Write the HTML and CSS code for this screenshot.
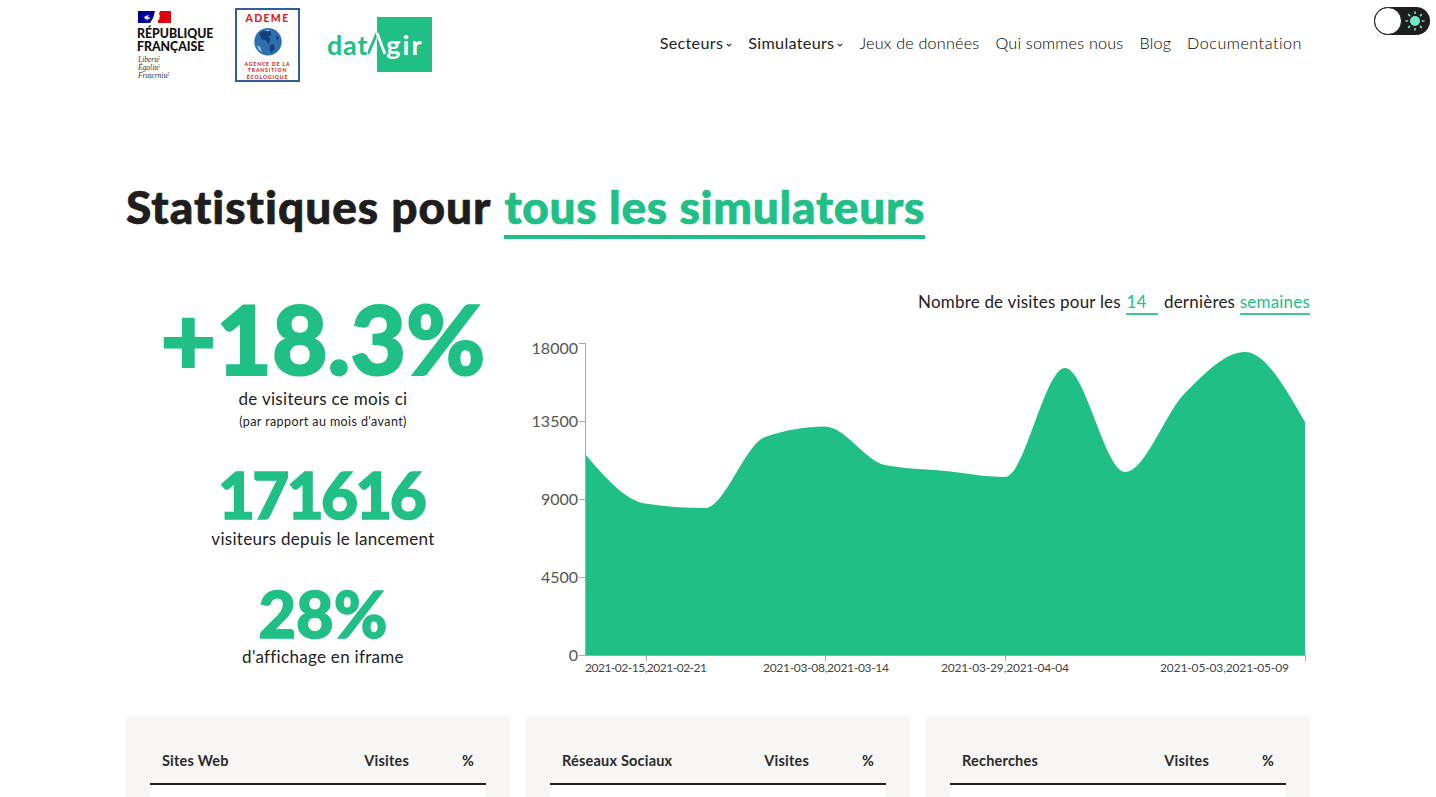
FILE: index.html
```html
<!DOCTYPE html>
<html lang="fr">
<head>
<meta charset="utf-8">
<title>Statistiques pour tous les simulateurs</title>
<link rel="stylesheet" href="styles.css">
</head>
<body>
<button class="toggle" aria-label="Thème">
  <span class="knob"></span>
  <svg class="sun" width="20" height="20" viewBox="0 0 20 20">
    <circle cx="10" cy="10" r="5" fill="#6fe8c3"/>
    <g stroke="#6fe8c3" stroke-width="1.6" stroke-linecap="round">
      <path d="M10 1v1.5M10 17.500v1.500M1 10h1.500M17.500 10H19M3.600 3.600l1 1M15.400 15.400l1 1M3.600 16.400l1-1M15.400 4.600l1-1"/>
    </g>
  </svg>
</button>
<div class="page">
  <header class="header">
    <div class="logos">
      <div class="rf">
        <svg class="rf-flag" width="33" height="12" viewBox="0 0 33 12">
          <rect width="17" height="12" fill="#000091"/>
          <rect x="20" width="13" height="12" fill="#e1000f"/>
          <path d="M12 12c1-2 2-3 3-5 1-2 1-4 2-7h5l-1 3 1 2-1 2 1 1-2 1-1 3z" fill="#fff"/>
          <path d="M7 5l4-1-1 2 3 1-4 2-3-2z" fill="#d5d8f0"/>
        </svg>
        <div class="rf-name">RÉPUBLIQUE<br>FRANÇAISE</div>
        <div class="rf-motto">Liberté<br>Égalité<br>Fraternité</div>
      </div>
      <div class="ademe">
        <div class="ademe-name">ADEME</div>
        <svg class="ademe-globe" width="32" height="32" viewBox="0 0 32 32">
          <circle cx="16" cy="16" r="16" fill="#2e6fb0"/>
          <path d="M6 6c4-3 10-4 13-2l1 4-4 2 3 3-2 6-4-5-5-1zM18 20l5-1 1 5-4 5-2-4zM25 8l4 4-3 2z" fill="#173f78"/>
          <path d="M12 2l6 0-2 2zM3 20l4 2 2 6-4-3z" fill="#9dc3e4"/>
        </svg>
        <div class="ademe-text">AGENCE DE LA<br>TRANSITION<br>ÉCOLOGIQUE</div>
      </div>
      <div class="datagir">
        <span class="datagir-dat">dat</span>
        <svg class="datagir-caret" width="18" height="34" viewBox="0 0 18 34">
          <path d="M0 26L9 5" stroke="#20bf85" stroke-width="2.800" fill="none"/>
          <path d="M9 5l8 21" stroke="#fff" stroke-width="2.800" fill="none"/>
        </svg>
        <span class="datagir-box"><span class="datagir-gir">gir</span></span>
      </div>
    </div>
    <nav class="nav">
      <a class="nav-item nav-strong">Secteurs<svg class="chev" width="6" height="4" viewBox="0 0 6 4"><path d="M.8.800L3 3l2.200-2.200" fill="none" stroke="#333" stroke-width="1.200"/></svg></a>
      <a class="nav-item nav-strong">Simulateurs<svg class="chev" width="6" height="4" viewBox="0 0 6 4"><path d="M.8.800L3 3l2.200-2.200" fill="none" stroke="#333" stroke-width="1.200"/></svg></a>
      <a class="nav-item">Jeux de données</a>
      <a class="nav-item">Qui sommes nous</a>
      <a class="nav-item">Blog</a>
      <a class="nav-item nav-doc">Documentation</a>
    </nav>
  </header>

  <h1 class="title">Statistiques pour <span class="title-accent">tous les simulateurs</span></h1>

  <section class="stats">
    <div class="numbers">
      <div class="big">+18.3%</div>
      <div class="label">de visiteurs ce mois ci</div>
      <div class="sublabel">(par rapport au mois d'avant)</div>
      <div class="mid mid-first">171616</div>
      <div class="label">visiteurs depuis le lancement</div>
      <div class="mid mid-second">28%</div>
      <div class="label">d'affichage en iframe</div>
    </div>
    <div class="chart">
      <div class="caption">Nombre de visites pour les <span class="field field-num">14</span> dernières <span class="field">semaines</span></div>
      <svg class="chart-svg" width="800" height="350" viewBox="520 330 800 350">
        <path fill="#20bf85" d="M585,454 C605,477.250 625,500.500 645,503.500 C665,506.500 685,508 705,508 C725,508 745,444 765,437 C785,430 805,426.500 825,426.500 C845,426.500 865,461 885,465 C905,469 925,469 945,471 C965,473 985,477 1005,477 C1025,477 1045,368 1065,368 C1085,368 1105,472 1125,472 C1145,472 1165,413 1185,393 C1205,373 1225,352 1245,352 C1265,352 1285,387 1305,422 L1305,655 L585,655 Z"/>
        <g class="axis-line">
          <path d="M585.500 343V655.500H1305.500"/>
          <path d="M579 343.500H585M579 421.500H585M579 499.500H585M579 577.500H585M579 655.500H585"/>
          <path d="M646.500 655V661M825.500 655V661M1005.500 655V661M1305.500 655V661"/>
        </g>
        <g class="y-label">
          <text x="578" y="354">18000</text>
          <text x="578" y="427">13500</text>
          <text x="578" y="505">9000</text>
          <text x="578" y="583">4500</text>
          <text x="578" y="661">0</text>
        </g>
        <g class="x-label">
          <text x="585" y="672" textLength="122">2021-02-15,2021-02-21</text>
          <text x="763" y="672" textLength="126">2021-03-08,2021-03-14</text>
          <text x="941" y="672" textLength="128">2021-03-29,2021-04-04</text>
          <text x="1160" y="672" textLength="129">2021-05-03,2021-05-09</text>
        </g>
      </svg>
    </div>
  </section>

  <section class="tables">
    <div class="card">
      <div class="card-head"><span>Sites Web</span><span class="num">Visites</span><span class="num">%</span></div>
      <div class="card-body"></div>
    </div>
    <div class="card">
      <div class="card-head"><span>Réseaux Sociaux</span><span class="num">Visites</span><span class="num">%</span></div>
      <div class="card-body"></div>
    </div>
    <div class="card">
      <div class="card-head"><span>Recherches</span><span class="num">Visites</span><span class="num">%</span></div>
      <div class="card-body"></div>
    </div>
  </section>
</div>
</body>
</html>
```

FILE: styles.css
```css
* { box-sizing: border-box; }
html, body { margin: 0; height: 797px; overflow: hidden; }
body { background: #fff; color: #1e1e1e; font-family: "Lato", "Liberation Sans", sans-serif; }

.toggle { position: absolute; top: 7px; left: 1374px; width: 56px; height: 28px; padding: 0; border: 0; border-radius: 14px; background: #1e1e1e; }
.knob { position: absolute; left: 0; top: 0; width: 28px; height: 28px; border-radius: 50%; background: #fff; border: 1.5px solid #1e1e1e; }
.sun { position: absolute; left: 31px; top: 4px; }

.page { width: 1184px; margin: 0 auto; }

.header { display: flex; align-items: center; justify-content: space-between; height: 88px; padding: 0 8px 0 12px; }
.logos { display: flex; align-items: flex-start; align-self: flex-start; }

.rf { width: 97px; padding-top: 11px; }
.rf-flag { display: block; }
.rf-name { margin-top: 4px; margin-left: -1px; font-size: 12.300px; line-height: 13px; font-weight: 900; color: #111; }
.rf-motto { margin-top: 3px; font-family: "Liberation Serif", serif; font-style: italic; font-size: 7.500px; line-height: 8px; color: #333; }

.ademe { display: flex; flex-direction: column; align-items: center; width: 65px; height: 74px; margin-top: 8px; padding-top: 2px; border: 2px solid #2f5f96; }
.ademe-name { font-size: 10.500px; line-height: 12px; font-weight: 900; letter-spacing: 1.300px; color: #d8232a; }
.ademe-globe { margin-top: 4px; }
.ademe-text { margin-top: 5px; font-size: 5px; line-height: 6.500px; font-weight: 900; letter-spacing: .9px; text-align: center; white-space: nowrap; color: #d8232a; }

.datagir { display: flex; align-items: center; height: 55px; margin-top: 17px; margin-left: 27px; }
.datagir-dat { font-size: 27px; font-weight: 700; letter-spacing: .8px; color: #20bf85; }
.datagir-caret { position: relative; z-index: 1; margin-right: -9px; }
.datagir-box { display: flex; align-items: center; width: 55px; height: 55px; padding-left: 9px; background: #20bf85; }
.datagir-gir { font-size: 27px; font-weight: 700; letter-spacing: 2px; color: #fff; }

.nav { display: flex; align-items: center; gap: 16px; padding-bottom: 3px; font-size: 16.200px; font-weight: 300; letter-spacing: .2px; color: #000; }
.nav-item { white-space: nowrap; }
.nav-strong { font-weight: 400; letter-spacing: .3px; color: #222; }
.nav-doc { letter-spacing: .5px; }
.chev { margin-left: 3px; vertical-align: 2px; }

.title { margin: 91px 0 0; padding-bottom: 1px; font-size: 46px; line-height: 56px; font-weight: 900; letter-spacing: 1px; color: #1e1e1e; -webkit-text-stroke: .7px currentColor; }
.title-accent { display: inline-block; margin-left: 2px; letter-spacing: .72px; color: #20bf85; border-bottom: 4px solid #20bf85; }

.stats { display: flex; margin-top: 51px; }
.numbers { width: 394px; text-align: center; }
.big { margin-bottom: 3px; font-size: 96px; line-height: 94px; font-weight: 900; color: #20bf85; -webkit-text-stroke: 2px currentColor; }
.mid { margin-bottom: 1px; font-size: 64px; line-height: 64px; font-weight: 900; color: #20bf85; -webkit-text-stroke: 1.400px currentColor; }
.mid-first { margin-top: 33px; padding-right: 4px; letter-spacing: -2.800px; }
.mid-second { margin-top: 31px; font-size: 65px; }
.label { font-size: 17px; line-height: 22px; letter-spacing: .3px; color: #222; }
.sublabel { margin-top: 4px; font-size: 12.500px; line-height: 16px; letter-spacing: .4px; color: #222; }

.chart { width: 790px; display: flex; flex-direction: column; align-items: flex-end; }
.caption { font-size: 17px; line-height: 22px; letter-spacing: .2px; color: #222; }
.field { display: inline-block; color: #20bf85; border-bottom: 2px solid #3cc796; }
.field-num { width: 32px; margin: 0 1px; }
.chart-svg { display: block; margin-top: 15px; margin-right: -10px; overflow: visible; }
.axis-line path { fill: none; stroke: #a8a8a8; stroke-width: 1; }
.y-label text { font-size: 16px; fill: #555; text-anchor: end; }
.x-label text { font-size: 12px; fill: #444; }

.tables { display: grid; grid-template-columns: repeat(3, 384px); gap: 16px; margin-top: 36px; }
.card { padding: 0 24px; background: #f7f6f4; height: 200px; }
.card-head { display: grid; grid-template-columns: 1fr 60px 65px; align-items: center; height: 69px; padding: 22px 12px 0; border-bottom: 2px solid #1e1e1e; font-size: 14.500px; font-weight: 700; letter-spacing: .2px; color: #2a2a2a; }
.num { text-align: right; }
.card-body { height: 131px; background: #fff; }
```
